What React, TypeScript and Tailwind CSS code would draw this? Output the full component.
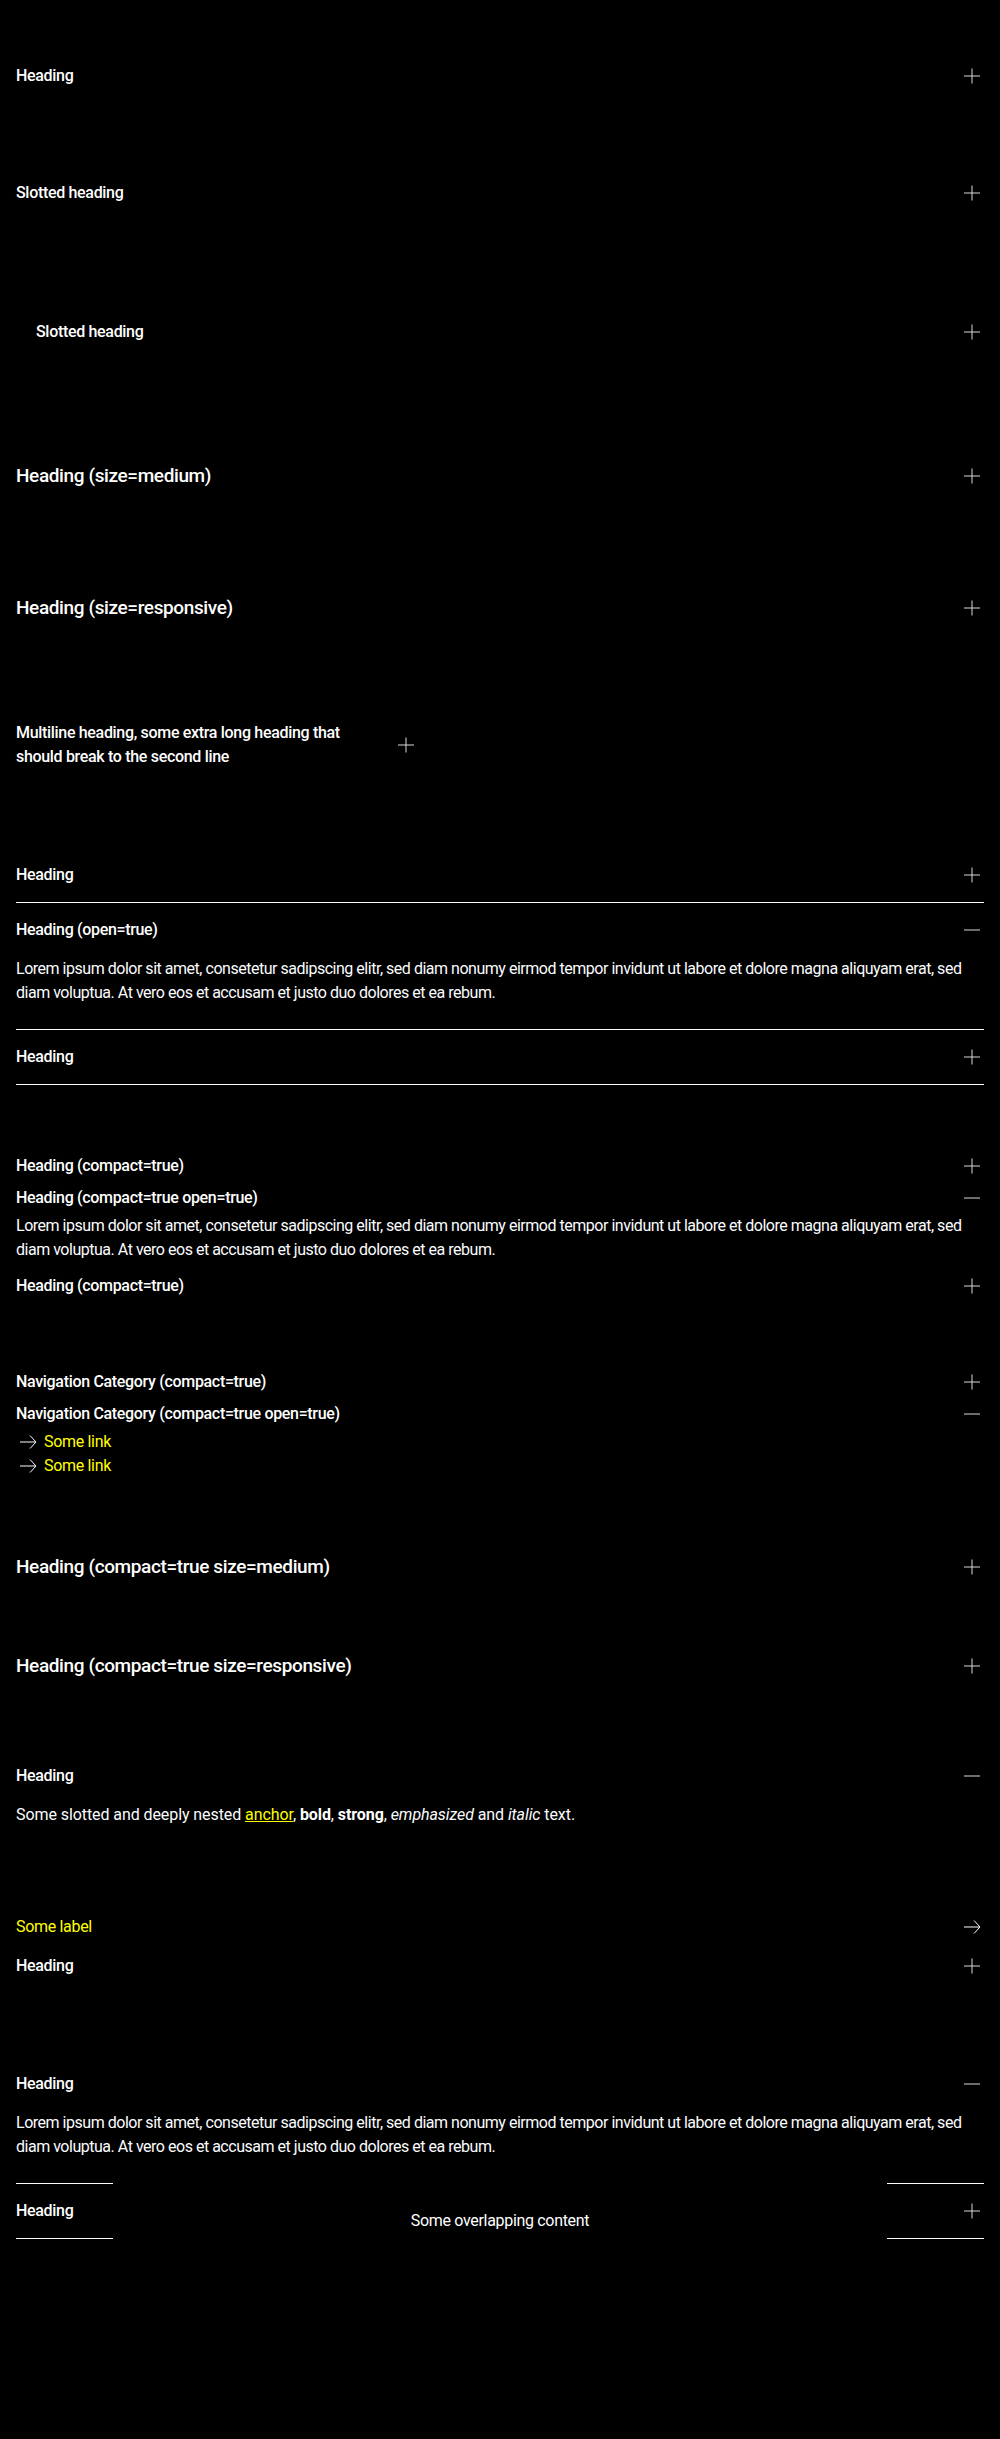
import React from 'react'

const font = { fontFamily: 'Roboto, "Liberation Sans", sans-serif' }

const PlusIcon = () => (
  <svg width="24" height="24" viewBox="0 0 24 24" className="shrink-0">
    <path d="M12 4.5v15M4 12h16" stroke="#d8d8d8" strokeWidth="1" fill="none" />
  </svg>
)

const MinusIcon = () => (
  <svg width="24" height="24" viewBox="0 0 24 24" className="shrink-0">
    <path d="M4 12h16" stroke="#d8d8d8" strokeWidth="1" fill="none" />
  </svg>
)

const ArrowIcon = () => (
  <svg width="24" height="24" viewBox="0 0 24 24" className="shrink-0">
    <path d="M4 12h15.5M14 5.5l6 6.5-6 6.5" stroke="#fbfcff" strokeWidth="1" fill="none" />
  </svg>
)

type AccordionProps = {
  heading: React.ReactNode
  open?: boolean
  compact?: boolean
  medium?: boolean
  border?: boolean
  className?: string
  headingClass?: string
  children?: React.ReactNode
}

const Accordion = ({ heading, open, compact, medium, border, className = '', headingClass = '', children }: AccordionProps) => {
  const py = compact ? 'py-1' : 'py-[15px]'
  const size = medium ? 'text-[19px] leading-[30px]' : 'text-base leading-6'
  return (
    <div className={`${border ? 'border-b border-[#fbfcff]' : ''} ${className}`}>
      <div className={`flex items-center justify-between gap-6 ${py}`}>
        <span className={`font-medium tracking-[-0.02em] text-white ${size} ${headingClass}`}>{heading}</span>
        {open ? <MinusIcon /> : <PlusIcon />}
      </div>
      {open && (
        <div className={`text-base leading-6 tracking-[-0.03em] text-[#fbfcff] ${compact ? 'pb-2' : 'pb-6'}`}>
          {children}
        </div>
      )}
    </div>
  )
}

const lorem =
  'Lorem ipsum dolor sit amet, consetetur sadipscing elitr, sed diam nonumy eirmod tempor invidunt ut labore et dolore magna aliquyam erat, sed diam voluptua. At vero eos et accusam et justo duo dolores et ea rebum.'

const SomeLink = () => (
  <a href="#" className="flex items-center gap-1 leading-6 tracking-[-0.02em] text-[#ffff00]">
    <ArrowIcon />
    <span>Some link</span>
  </a>
)

export default function App() {
  return (
    <div className="min-h-[2439px] bg-black px-4 pt-[49px] pb-40 text-[#fbfcff]" style={font}>
      <Accordion heading="Heading" />
      <Accordion heading="Slotted heading" className="mt-[63px]" />
      <Accordion heading="Slotted heading" className="mt-[65px]" headingClass="p-5" />
      <Accordion heading="Heading (size=medium)" medium className="mt-[67px]" />
      <Accordion heading="Heading (size=responsive)" medium className="mt-[72px]" />
      <Accordion
        heading="Multiline heading, some extra long heading that should break to the second line"
        className="mt-[68px] w-[402px]"
      />

      <div className="mt-16">
        <Accordion heading="Heading" border />
        <Accordion heading="Heading (open=true)" open border>
          {lorem}
        </Accordion>
        <Accordion heading="Heading" border />
      </div>

      <div className="mt-[65px]">
        <Accordion heading="Heading (compact=true)" compact />
        <Accordion heading="Heading (compact=true open=true)" compact open>
          {lorem}
        </Accordion>
        <Accordion heading="Heading (compact=true)" compact />
      </div>

      <div className="mt-16">
        <Accordion heading="Navigation Category (compact=true)" compact />
        <Accordion heading="Navigation Category (compact=true open=true)" compact open>
          <SomeLink />
          <SomeLink />
        </Accordion>
      </div>

      <Accordion heading="Heading (compact=true size=medium)" compact medium className="mt-[62px]" />
      <Accordion heading="Heading (compact=true size=responsive)" compact medium className="mt-[61px]" />

      <Accordion heading="Heading" open className="mt-16">
        <span className="tracking-[-0.005em]">
          Some slotted and deeply nested{' '}
          <a href="#" className="text-[#ffff00] underline">
            anchor
          </a>
          , <b className="font-bold text-white">bold</b>, <strong className="font-bold text-white">strong</strong>,{' '}
          <em>emphasized</em> and <i>italic</i> text.
        </span>
      </Accordion>

      <div className="mt-16">
        <a href="#" className="flex items-center justify-between leading-6 tracking-[-0.02em] text-[#ffff00]">
          <span>Some label</span>
          <ArrowIcon />
        </a>
        <Accordion heading="Heading" />
      </div>

      <div className="relative mt-16">
        <Accordion heading="Heading" open border>
          {lorem}
        </Accordion>
        <Accordion heading="Heading" border />
        <div className="absolute left-[10%] top-[118px] flex h-[92px] w-[80%] items-center justify-center bg-black text-base tracking-[-0.02em] text-white">
          Some overlapping content
        </div>
      </div>
    </div>
  )
}
